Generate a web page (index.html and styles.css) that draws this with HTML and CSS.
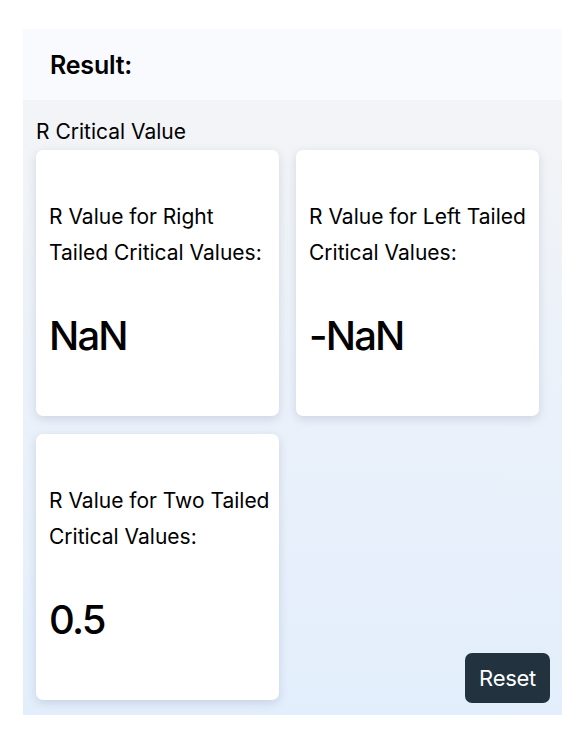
FILE: index.html
```html
<!DOCTYPE html>
<html>
<head>
<meta charset="utf-8">
<link rel="stylesheet" href="styles.css">
</head>
<body>
<div class="panel">
  <div class="panel-head"><h2 class="title">Result:</h2></div>
  <div class="panel-body">
    <div class="section-label">R Critical Value</div>
    <div class="cards">
      <div class="card">
        <div class="card-label">R Value for Right Tailed Critical Values:</div>
        <div class="card-value">NaN</div>
      </div>
      <div class="card">
        <div class="card-label">R Value for Left Tailed Critical Values:</div>
        <div class="card-value">-NaN</div>
      </div>
      <div class="card">
        <div class="card-label">R Value for Two Tailed Critical Values:</div>
        <div class="card-value">0.5</div>
      </div>
    </div>
    <button class="reset">Reset</button>
  </div>
</div>
</body>
</html>
```
FILE: styles.css
```css
html, body {
  margin: 0;
  padding: 0;
  background: #ffffff;
}
body {
  font-family: Inter, "Noto Sans", sans-serif;
  color: #000;
  padding: 29px 24px 20px 23px;
}
.panel {
  width: 539px;
}
.panel-head {
  background: #f8fafd;
  height: 71px;
  display: flex;
  align-items: center;
  padding-left: 27px;
}
.title {
  margin: 0;
  font-size: 25px;
  font-weight: 600;
  letter-spacing: -0.2px;
}
.panel-body {
  display: grid;
  grid-template-columns: 1fr;
  grid-template-rows: auto 1fr;
  padding: 18px 12px 12px 13px;
  background: linear-gradient(to bottom, #f3f4f6 0%, #eaf1fa 50%, #e3eefc 100%);
  height: 585px;
}
.section-label {
  font-size: 21px;
  line-height: 28px;
  margin-bottom: 4px;
}
.cards {
  grid-row: 2;
  grid-column: 1;
  display: grid;
  grid-template-columns: 243px 243px;
  column-gap: 17px;
  row-gap: 18px;
  align-content: start;
  margin-bottom: 3px;
}
.card {
  background: #fff;
  border-radius: 7px;
  box-shadow: 0 3px 10px rgba(100, 116, 139, 0.22);
  height: 266px;
  box-sizing: border-box;
  padding: 49px 9px 0 13px;
}
.card-label {
  font-size: 21px;
  line-height: 36px;
}
.card-value {
  font-size: 40px;
  font-weight: 500;
  line-height: 63px;
  margin-top: 33px;
  letter-spacing: -1.8px;
}
.reset {
  grid-row: 2;
  grid-column: 1;
  justify-self: end;
  align-self: end;
  width: 85px;
  height: 50px;
  border: none;
  border-radius: 7px;
  background: #22333f;
  color: #fff;
  font-family: Inter, "Noto Sans", sans-serif;
  font-size: 22px;
  letter-spacing: -0.3px;
  padding: 0;
}
```
